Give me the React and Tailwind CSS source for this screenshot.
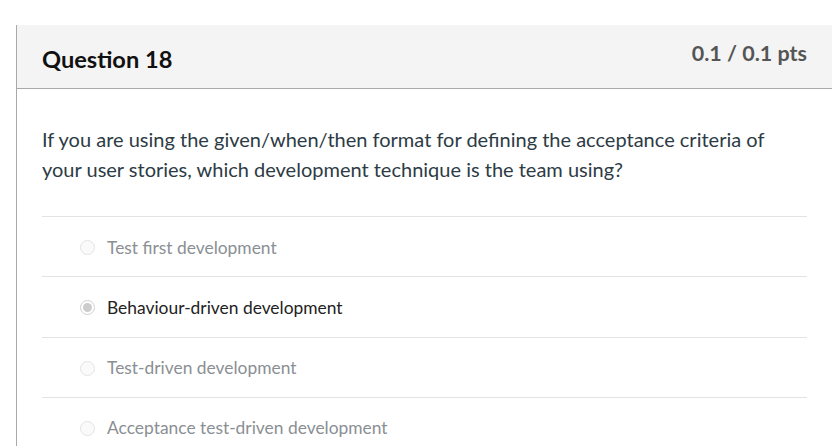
import React from "react";

const options = [
  { label: "Test first development", selected: false },
  { label: "Behaviour-driven development", selected: true },
  { label: "Test-driven development", selected: false },
  { label: "Acceptance test-driven development", selected: false },
];

function Radio({ selected }) {
  if (selected) {
    return (
      <span className="w-[15px] h-[15px] rounded-full border border-[#d0d0d0] bg-white flex items-center justify-center shrink-0">
        <span className="w-[9px] h-[9px] rounded-full bg-[#cdcdcd]" />
      </span>
    );
  }
  return <span className="w-[15px] h-[15px] rounded-full border border-[#e4e4e4] bg-[#fafafa] shrink-0" />;
}

export default function App() {
  return (
    <div className="bg-white min-h-[446px] pt-[25px] pl-4 overflow-hidden" style={{ fontFamily: "Lato, 'Open Sans', sans-serif" }}>
      <div className="w-[817px] border border-b-0 border-[#a9a9a9] bg-white">
        <div className="h-[64px] -mt-px bg-[#f4f4f4] border-b border-[#a9a9a9] flex items-start justify-between px-[25px] pt-[1px]">
          <div className="text-[23.6px] leading-[28px] font-bold text-[#111] mt-[19px]">Question 18</div>
          <div className="text-[21.5px] leading-[26px] font-bold text-[#555] mt-[14px]">0.1 / 0.1 pts</div>
        </div>
        <div className="px-[25px] pt-[35px]">
          <p className="text-[20px] leading-[30px] text-[#2d3b45]">
            If you are using the given/when/then format for defining the acceptance criteria of your user stories, which development technique is the team using?
          </p>
          <div className="mt-[32px]">
            {options.map((o) => (
              <div key={o.label} className="border-t border-[#e3e3e3] h-[60.3px] flex items-center pl-[38px] pt-[2px] gap-[12px]">
                <Radio selected={o.selected} />
                <span className={"text-[17.4px] " + (o.selected ? "text-[#222]" : "text-[#8a8f94]")}>{o.label}</span>
              </div>
            ))}
          </div>
        </div>
      </div>
    </div>
  );
}
